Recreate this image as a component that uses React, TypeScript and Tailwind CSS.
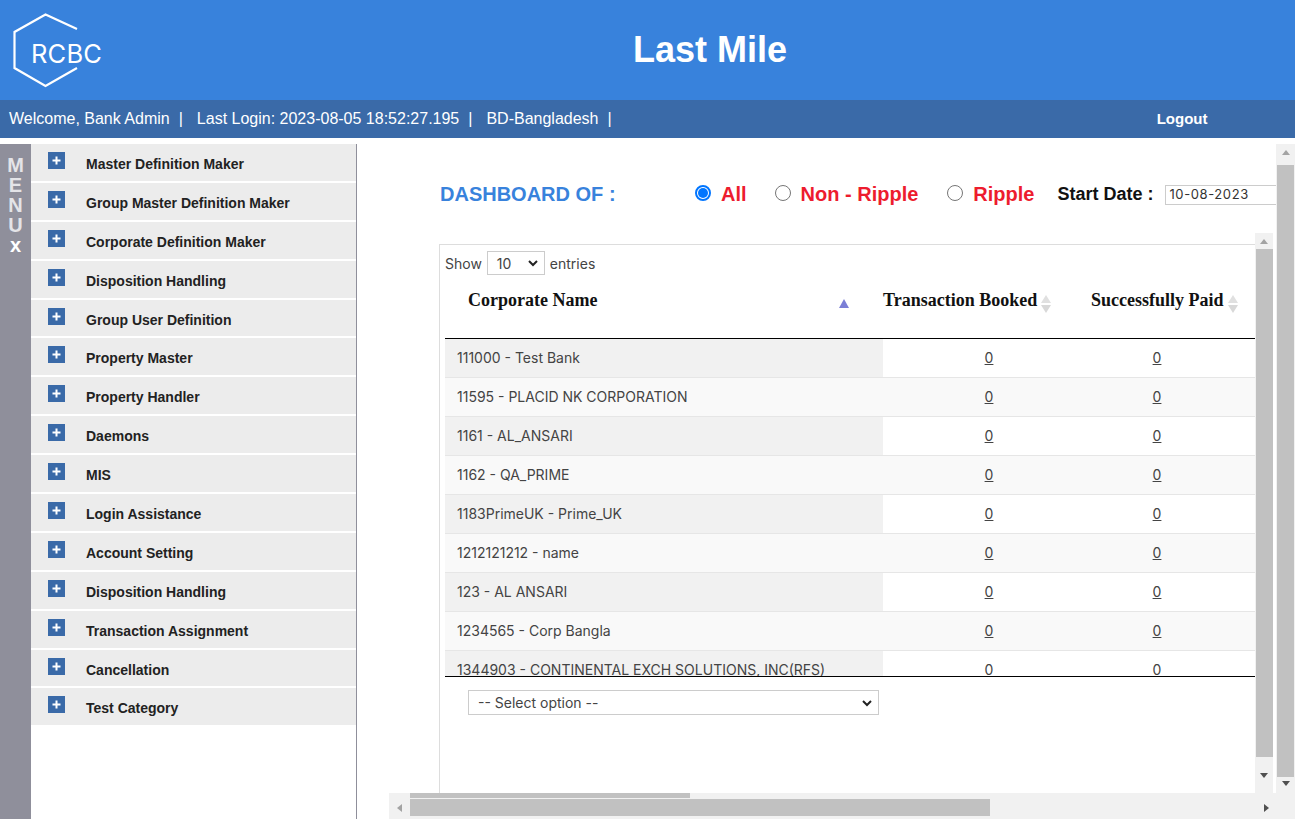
import React from 'react'

const menuItems = [
  'Master Definition Maker',
  'Group Master Definition Maker',
  'Corporate Definition Maker',
  'Disposition Handling',
  'Group User Definition',
  'Property Master',
  'Property Handler',
  'Daemons',
  'MIS',
  'Login Assistance',
  'Account Setting',
  'Disposition Handling',
  'Transaction Assignment',
  'Cancellation',
  'Test Category',
]

const rows = [
  '111000 - Test Bank',
  '11595 - PLACID NK CORPORATION',
  '1161 - AL_ANSARI',
  '1162 - QA_PRIME',
  '1183PrimeUK - Prime_UK',
  '1212121212 - name',
  '123 - AL ANSARI',
  '1234565 - Corp Bangla',
  '1344903 - CONTINENTAL EXCH SOLUTIONS, INC(RFS)',
]

function Logo() {
  return (
    <div className="relative ml-[13px] h-[75px] w-[90px]">
      <svg width="66" height="75" viewBox="0 0 66 75" fill="none" stroke="white" strokeWidth="2.2" className="block">
        <path d="M64 16 L32.5 1.5 L1.5 19 L1.5 55 L32.5 73 L64 55" />
      </svg>
      <span className="absolute left-[18px] top-[26px] font-['Inter',sans-serif] text-[25.5px] leading-[30px] font-normal tracking-[0.2px] text-white">RCBC</span>
    </div>
  )
}

function SortArrows() {
  return (
    <span className="ml-1 mt-2 flex flex-col gap-[2px]">
      <span className="h-0 w-0 border-x-[5px] border-b-[8px] border-x-transparent border-b-[#e0e0e0]" />
      <span className="h-0 w-0 border-x-[5px] border-t-[8px] border-x-transparent border-t-[#d8d8d8]" />
    </span>
  )
}

function Radio({ label, checked, className }: { label: string; checked?: boolean; className?: string }) {
  return (
    <label className={`flex items-center ${className ?? ''}`}>
      <span className={`mb-[3px] flex h-[16px] w-[16px] items-center justify-center rounded-full border bg-white ${checked ? 'border-[#0075ff] border-2' : 'border-[#767676]'}`}>
        {checked && <span className="h-[10px] w-[10px] rounded-full bg-[#0075ff]" />}
      </span>
      <span className="ml-[10px] text-[20px] font-bold leading-[24px] text-[#ed1c2e]">{label}</span>
    </label>
  )
}

export default function App() {
  return (
    <div className="h-[824px] w-[1295px] overflow-hidden bg-white font-['Liberation_Sans',Arial,sans-serif]">
      <header className="relative flex h-[100px] items-center bg-[#3882dc]">
        <Logo />
        <h1 className="absolute left-[633px] top-[29px] text-[36px] font-bold leading-[42px] text-white">Last Mile</h1>
      </header>

      <div className="flex h-[38px] items-center bg-[#3a6aa8] pl-[9px] text-[16px] text-white">
        <span>Welcome, Bank Admin</span>
        <span className="ml-[9px]">|</span>
        <span className="ml-[14px]">Last Login: 2023-08-05 18:52:27.195</span>
        <span className="ml-[9px]">|</span>
        <span className="ml-[14px]">BD-Bangladesh</span>
        <span className="ml-[9px]">|</span>
        <span className="ml-[545px] text-[15px] font-bold">Logout</span>
      </div>

      <div className="mt-[6px] flex h-[675px]">
        <div className="flex w-[31px] shrink-0 flex-col items-center bg-[#8f8f9b] pt-[11px] text-[20px] font-bold leading-[20px] text-[#e4e4e8]">
          <span>M</span>
          <span>E</span>
          <span>N</span>
          <span>U</span>
          <span className="text-white">x</span>
        </div>

        <nav className="w-[326px] shrink-0 border-r border-[#8f8f9b]">
          {menuItems.map((item, i) => (
            <div key={i} className="flex h-[38.9px] items-start border-b-2 border-white bg-[#ececec] pl-[17px]">
              <span className="mt-[8px] flex h-[17px] w-[17px] items-center justify-center bg-[#3a6aa8]">
                <svg width="11" height="11" viewBox="0 0 11 11" stroke="white" strokeWidth="2">
                  <path d="M5.5 1.5v8M1.5 5.5h8" />
                </svg>
              </span>
              <span className="ml-[21px] mt-[11px] text-[14px] font-bold leading-[18px] text-[#222]">{item}</span>
            </div>
          ))}
        </nav>

        <main className="relative flex-1 overflow-hidden">
          <div className="flex h-[100px] items-start pl-[83px] pt-[38px]">
            <span className="w-[255px] text-[20px] font-bold leading-[24px] text-[#3882dc]">DASHBOARD OF :</span>
            <Radio label="All" checked />
            <Radio label="Non - Ripple" className="ml-[28px]" />
            <Radio label="Ripple" className="ml-[29px]" />
            <span className="ml-[23px] text-[18px] font-bold leading-[24px] text-[#111]">Start Date :</span>
            <div className="ml-[12px] mt-[3px] flex h-[20px] w-[120px] items-center border border-[#ccc] pl-[3px] font-['Inter',sans-serif] text-[13px] tracking-[0.6px] text-[#333]">10-08-2023</div>
          </div>

          <section className="ml-[82px] h-[549px] w-[816px] border-l border-t border-[#ddd] pl-[5px] font-['Inter',sans-serif] text-[14px] text-[#444]">
            <div className="flex h-[36px] items-center">
              <span>Show</span>
              <div className="mx-[5px] flex h-[24px] w-[58px] items-center justify-between border border-[#ccc] pl-[9px] pr-[5px]">
                <span>10</span>
                <svg width="12" height="12" viewBox="0 0 12 12" fill="none" stroke="#222" strokeWidth="2"><path d="M2 4l4 4 4-4" /></svg>
              </div>
              <span>entries</span>
            </div>

            <div className="flex h-[58px] border-b border-black font-['Liberation_Serif',serif] text-[18px] font-bold text-[#111]">
              <div className="flex w-[438px] items-start pl-[23px] pt-[6px]">
                <span className="w-[371px]">Corporate Name</span>
                <span className="mt-[12px] h-0 w-0 border-x-[5px] border-b-[9px] border-x-transparent border-b-[#7b7fd6]" />
              </div>
              <div className="flex w-[200px] items-start pl-[-3px] pt-[6px]">
                <span className="whitespace-nowrap">Transaction Booked</span>
                <SortArrows />
              </div>
              <div className="flex flex-1 items-start overflow-hidden pl-[8px] pt-[6px]">
                <span className="whitespace-nowrap">Successfully Paid</span>
                <SortArrows />
              </div>
            </div>

            <div className="h-[338px] overflow-hidden border-b border-black">
              {rows.map((row, i) => (
                <div key={row} className={`flex h-[39px] border-b border-[#e6e6e6] ${i % 2 ? 'bg-[#f9f9f9]' : 'bg-white'}`}>
                  <div className={`w-[438px] whitespace-nowrap pl-[12px] pt-[10px] leading-[18px] ${i % 2 ? 'bg-[#f9f9f9]' : 'bg-[#f1f1f1]'}`}>{row}</div>
                  <div className="w-[212px] pt-[10px] text-center leading-[18px] underline">0</div>
                  <div className="flex-1 pr-[36px] pt-[10px] text-center leading-[18px] underline">0</div>
                </div>
              ))}
            </div>

            <div className="ml-[23px] mt-[13px] flex h-[25px] w-[411px] items-center justify-between border border-[#ccc] pl-[9px] pr-[5px] text-[#444]">
              <span>-- Select option --</span>
              <svg width="12" height="12" viewBox="0 0 12 12" fill="none" stroke="#222" strokeWidth="2"><path d="M2 4l4 4 4-4" /></svg>
            </div>
          </section>

          {/* Inner vertical scrollbar */}
          <div className="absolute left-[898px] top-[89px] flex h-[560px] w-[18px] flex-col items-center bg-[#f1f1f1]">
            <span className="mt-[6px] h-0 w-0 border-x-[4px] border-b-[5px] border-x-transparent border-b-[#a3a3a3]" />
            <div className="mx-auto mt-[5px] h-[508px] w-[17px] bg-[#c1c1c1]" />
            <span className="mt-[16px] h-0 w-0 border-x-[4px] border-t-[5px] border-x-transparent border-t-[#505050]" />
          </div>

          {/* Outer vertical scrollbar */}
          <div className="absolute left-[919px] top-0 flex h-[649px] w-[19px] flex-col items-center bg-[#f1f1f1]">
            <span className="mt-[6px] h-0 w-0 border-x-[4px] border-b-[5px] border-x-transparent border-b-[#a3a3a3]" />
            <div className="mt-[10px] h-[612px] w-[17px] bg-[#c1c1c1]" />
            <span className="mt-[4px] h-0 w-0 border-x-[4px] border-t-[5px] border-x-transparent border-t-[#505050]" />
          </div>

          {/* Horizontal scrollbars */}
          <div className="absolute bottom-0 left-[32px] right-0 h-[26px] bg-[#f1f1f1]">
            <div className="ml-[21px] h-[5px] w-[280px] bg-[#c1c1c1]" />
            <div className="ml-[21px] mt-[1px] h-[17px] w-[580px] bg-[#c1c1c1]" />
            <span className="absolute left-[8px] top-[11px] h-0 w-0 border-y-[4px] border-r-[5px] border-y-transparent border-r-[#a3a3a3]" />
            <span className="absolute right-[26px] top-[11px] h-0 w-0 border-y-[4px] border-l-[5px] border-y-transparent border-l-[#505050]" />
          </div>
        </main>
      </div>
    </div>
  )
}
